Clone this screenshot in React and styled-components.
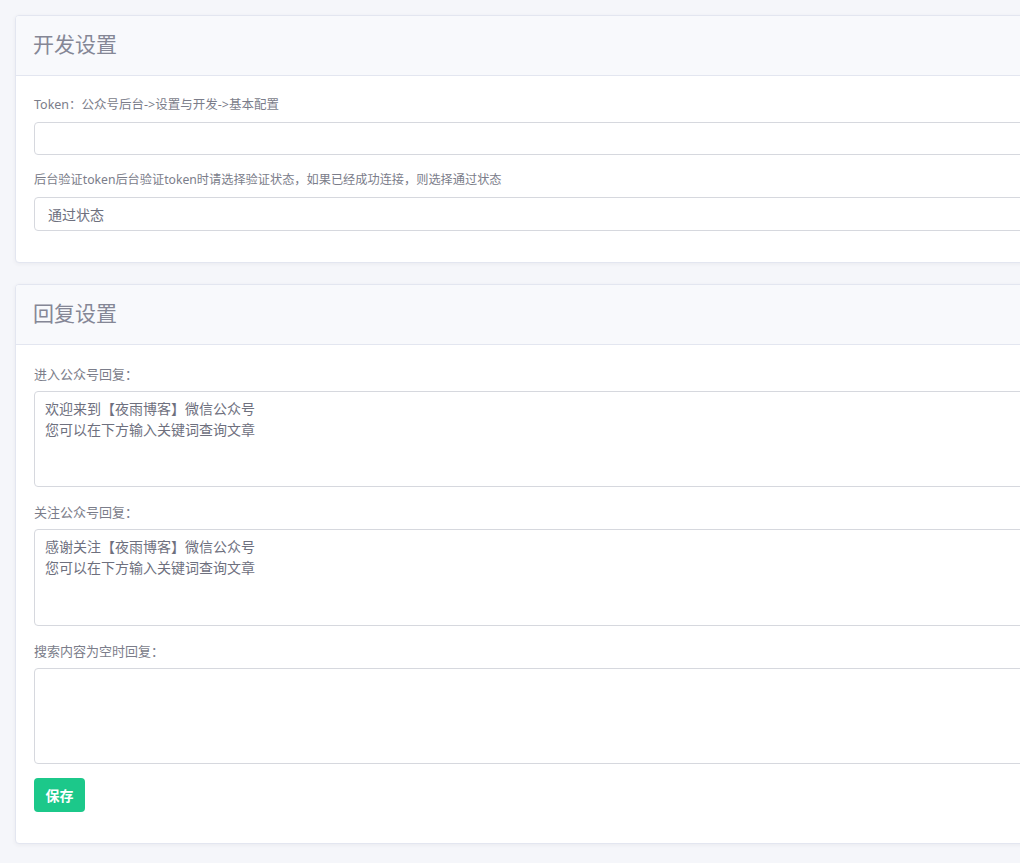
import React from "react";
import styled, { createGlobalStyle } from "styled-components";

const Global = createGlobalStyle`
  html, body { margin: 0; padding: 0; overflow: hidden; }
  body {
    background: #f5f6fa;
    font-family: "Noto Sans", "Noto Sans CJK SC", sans-serif;
    color: #6e707e;
  }
`;

const Page = styled.div`
  width: 1100px;
  padding: 15px 15px 20px 15px;
  box-sizing: border-box;
  display: flex;
  flex-direction: column;
  gap: 21px;
`;

const Card = styled.section`
  background: #fff;
  border: 1px solid #e3e6f0;
  border-radius: 4px;
  box-shadow: 0 1px 4px rgba(58, 59, 69, 0.06);
  overflow: hidden;
`;

const CardHeader = styled.header`
  height: 60px;
  box-sizing: border-box;
  background: #f8f9fc;
  border-bottom: 1px solid #e3e6f0;
  display: flex;
  align-items: center;
  padding: 0 17px 5px 17px;
`;

const Title = styled.h2`
  margin: 0;
  font-size: 21px;
  font-weight: 400;
  color: #858796;
  font-family: "Noto Sans CJK SC", sans-serif;
`;

const CardBody = styled.div`
  padding: 20px 18px 31px 18px;
  display: flex;
  flex-direction: column;
`;

const Field = styled.div`
  display: flex;
  flex-direction: column;
  gap: 8px;
  & + & { margin-top: 16px; }
`;

const Label = styled.label`
  font-size: ${(p) => p.$size || 13}px;
  line-height: 18px;
  color: #7b7d8a;
  font-family: "Noto Sans", "Noto Sans CJK SC", sans-serif;
`;

const Input = styled.input`
  height: 33px;
  box-sizing: border-box;
  border: 1px solid #d6d8de;
  border-radius: 4px;
  padding: 0 14px;
  font-size: 14px;
  color: #6e707e;
  font-family: "Noto Sans CJK SC", sans-serif;
  outline: none;
  background: #fff;
`;

const Select = styled.select`
  height: 34px;
  box-sizing: border-box;
  border: 1px solid #d6d8de;
  border-radius: 4px;
  padding: 0 13px;
  font-size: 14px;
  color: #6e707e;
  font-family: "Noto Sans CJK SC", sans-serif;
  appearance: none;
  -webkit-appearance: none;
  background: #fff;
  outline: none;
`;

const TextArea = styled.textarea`
  height: ${(p) => p.$h || 96}px;
  box-sizing: border-box;
  border: 1px solid #d6d8de;
  border-radius: 4px;
  padding: 6px 10px;
  font-size: 14px;
  line-height: 21px;
  color: #6e707e;
  font-family: "Noto Sans CJK SC", sans-serif;
  resize: none;
  outline: none;
`;

const SaveButton = styled.button`
  align-self: flex-start;
  margin-top: 14px;
  width: 51px;
  height: 34px;
  padding: 0;
  border: none;
  border-radius: 4px;
  background: #1cc88a;
  color: #fff;
  font-size: 14px;
  font-weight: 700;
  font-family: "Noto Sans CJK SC", sans-serif;
  cursor: pointer;
`;

export default function App() {
  return (
    <>
      <Global />
      <Page>
        <Card>
          <CardHeader>
            <Title>开发设置</Title>
          </CardHeader>
          <CardBody>
            <Field>
              <Label $size={12.5}>Token：公众号后台-&gt;设置与开发-&gt;基本配置</Label>
              <Input type="text" defaultValue="" />
            </Field>
            <Field>
              <Label $size={12.2}>后台验证token后台验证token时请选择验证状态，如果已经成功连接，则选择通过状态</Label>
              <Select defaultValue="1">
                <option value="1">通过状态</option>
                <option value="0">验证状态</option>
              </Select>
            </Field>
          </CardBody>
        </Card>
        <Card>
          <CardHeader>
            <Title>回复设置</Title>
          </CardHeader>
          <CardBody>
            <Field>
              <Label>进入公众号回复：</Label>
              <TextArea defaultValue={"欢迎来到【夜雨博客】微信公众号\n您可以在下方输入关键词查询文章"} />
            </Field>
            <Field>
              <Label>关注公众号回复：</Label>
              <TextArea $h={97} defaultValue={"感谢关注【夜雨博客】微信公众号\n您可以在下方输入关键词查询文章"} />
            </Field>
            <Field>
              <Label>搜索内容为空时回复：</Label>
              <TextArea defaultValue="" />
            </Field>
            <SaveButton type="button">保存</SaveButton>
          </CardBody>
        </Card>
      </Page>
    </>
  );
}
